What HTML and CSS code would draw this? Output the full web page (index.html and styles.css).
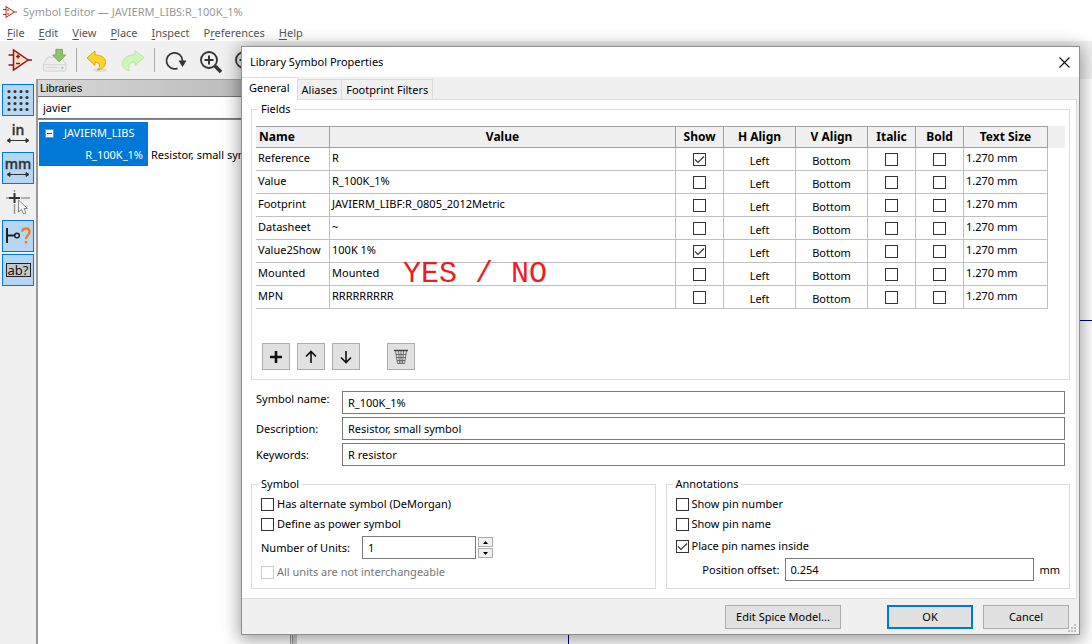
FILE: index.html
```html
<!DOCTYPE html>
<html lang="en">
<head>
<meta charset="utf-8">
<title>Symbol Editor</title>
<link rel="stylesheet" href="styles.css">
</head>
<body>
<div class="app">
  <header class="titlebar">
    <svg class="app-icon" viewBox="0 0 14 14"><path d="M3 1.5V12.500L11.500 7Z" fill="#fdf3dc" stroke="#b3282d"/><path d="M0 4.500H3M0 9.500H3M11.500 7H14M4 5H6M4 9H6" stroke="#b3282d" fill="none"/></svg>
    <span>Symbol Editor — JAVIERM_LIBS:R_100K_1%</span>
  </header>
  <nav class="menubar">
    <button><u>F</u>ile</button><button><u>E</u>dit</button><button><u>V</u>iew</button><button><u>P</u>lace</button><button><u>I</u>nspect</button><button>P<u>r</u>eferences</button><button><u>H</u>elp</button>
  </nav>
  <div class="toolbar">
    <button aria-label="New symbol"><svg viewBox="0 0 24 24"><path d="M5.500 2V22L20 12Z" fill="#f7e8c8" stroke="#a01015" stroke-width="1.500"/><path d="M0.500 7H5.500M0.500 17H5.500M20 12H24M8 8.500H12M10 6.500V10.500M8 15.500H12" stroke="#a01015" stroke-width="1.500" fill="none"/></svg></button>
    <button aria-label="Save"><svg viewBox="0 0 26 24"><path d="M5 9H20L25 17V23Q25 24 24 24H1.500Q.5 24 .5 23V17Z" fill="#ededed" stroke="#cfcfcf"/><path d="M1 17H24.500" stroke="#d6d6d6"/><path d="M4 20H16" stroke="#d0d0d0"/><path d="M20 19.500h2v2h-2z" fill="#8fd08a"/><path d="M14 0.500H21V6.500H24.500L17.500 14L10.500 6.500H14Z" fill="#8fc46c" stroke="#6f9f58"/></svg></button>
    <span class="sep"></span>
    <button aria-label="Undo"><svg viewBox="0 0 24 24"><ellipse cx="14" cy="22" rx="7" ry="2" fill="#dedede"/><path d="M1 10L9 3V7C16 7 20 10.500 19.500 15C19 19 15.500 21.500 11.500 22C14.500 19 14.500 14.500 9 14V17.500Z" fill="#f9d62b" stroke="#dca60c"/></svg></button>
    <button aria-label="Redo"><svg viewBox="0 0 24 24"><path d="M23 9.500L14 2.500V7C6.500 6.500 1.500 11 1.500 15.500C1.500 19.500 4.500 22.500 8.500 22.500C6.500 18 8.500 14 14 14V17.500Z" fill="#d3f3bd" stroke="#b3e89b"/></svg></button>
    <span class="sep"></span>
    <button aria-label="Refresh"><svg viewBox="0 0 24 24"><path d="M13.500 20.300A8 8 0 1 1 18.500 13" fill="none" stroke="#333" stroke-width="1.800"/><path d="M14.500 12.500H22.500L18.500 19Z" fill="#333"/></svg></button>
    <button aria-label="Zoom in"><svg viewBox="0 0 24 24"><circle cx="10" cy="12" r="8" fill="none" stroke="#333" stroke-width="1.800"/><path d="M5.500 12H14.500M10 7.500V16.500" stroke="#333" stroke-width="2"/><path d="M16 18L22 24" stroke="#333" stroke-width="3.500"/></svg></button>
    <button aria-label="Zoom out"><svg viewBox="0 0 24 24"><circle cx="10" cy="12" r="8" fill="none" stroke="#333" stroke-width="1.800"/><path d="M5.500 12H14.500" stroke="#333" stroke-width="2"/><path d="M16 18L22 24" stroke="#333" stroke-width="3.500"/></svg></button>
  </div>
  <div class="workspace">
    <aside class="tools">
      <button class="on" aria-label="Grid"><svg viewBox="0 0 24 24"><path d="M3 3.500H24M3 9.500H24M3 15.500H24M3 21.500H24" stroke="#333" stroke-width="3.200" stroke-linecap="round" stroke-dasharray="0 6"/></svg></button>
      <button aria-label="Inches"><svg viewBox="0 0 24 24"><text x="12" y="13" class="unit">in</text><path d="M2 18.500H22M4 16.500L1 18.500L4 20.500ZM20 16.500L23 18.500L20 20.500Z" stroke="#333" fill="#333"/></svg></button>
      <button class="on" aria-label="Millimeters"><svg viewBox="0 0 24 24"><text x="12" y="13" class="unit">mm</text><path d="M2 18.500H22M4 16.500L1 18.500L4 20.500ZM20 16.500L23 18.500L20 20.500Z" stroke="#333" fill="#333"/></svg></button>
      <button aria-label="Cursor shape"><svg viewBox="0 0 24 24"><path d="M0 8H5M15 8H24M8.500 0V2M8.500 14V24" stroke="#999" stroke-width="1.500"/><path d="M3 8H14M8.500 3V13" stroke="#333" stroke-width="2"/><path d="M12.500 10V22L15.500 19.500L17.500 24L20 23L18 18.500H21.500Z" fill="#f5f5f5" stroke="#888"/></svg></button>
      <button class="on" aria-label="Pin electrical type"><svg viewBox="0 0 24 24"><path d="M1 4V19M1 11.500H9" stroke="#222" stroke-width="2"/><circle cx="11" cy="11.500" r="2.300" fill="none" stroke="#222" stroke-width="1.500"/><path d="M16 7.500C17 3.500 23.500 3.500 23.500 8C23.500 11 20 11.500 20 15M20 17V19.500" fill="none" stroke="#f47b20" stroke-width="2.400"/></svg></button>
      <button class="on" aria-label="Show text"><svg viewBox="0 0 24 24"><rect x=".5" y="5.500" width="24" height="13" fill="#c8c8c8" stroke="#222"/><text x="12" y="17" class="abc">ab?</text></svg></button>
    </aside>
    <section class="libraries">
      <h2>Libraries</h2>
      <input class="search" aria-label="Filter libraries" value="javier">
      <div class="tree">
        <div class="names">
          <div class="node"><svg viewBox="0 0 9 9"><path d="M.5 .5H8.500V8.500H.5Z" fill="#f6f6f6" stroke="#8c8c8c"/><path d="M2 4.500H7" stroke="#2a4fa0"/></svg>JAVIERM_LIBS</div>
          <div class="leaf">R_100K_1%</div>
        </div>
        <div class="descr">Resistor, small symbol</div>
      </div>
    </section>
    <div class="splitter"></div>
    <main class="canvas"></main>
  </div>
</div>

<div class="dialog" role="dialog" aria-labelledby="dlg-title">
  <div class="dlg-head">
    <span id="dlg-title">Library Symbol Properties</span>
    <button class="close" aria-label="Close"><svg viewBox="0 0 11 11"><path d="M.5 .5L10.500 10.500M10.500 .5L.5 10.500" stroke="#111" stroke-width="1.200"/></svg></button>
  </div>
  <div class="tabs" role="tablist">
    <button role="tab" class="tab active">General</button><button role="tab" class="tab">Aliases</button><button role="tab" class="tab">Footprint Filters</button>
  </div>
  <div class="page">
    <fieldset class="fields">
      <legend>Fields</legend>
      <table>
        <colgroup><col class="c-name"><col><col class="c-check"><col class="c-align"><col class="c-align"><col class="c-check"><col class="c-check"><col class="c-size"><col class="c-fill"></colgroup>
        <thead><tr><th class="left">Name</th><th>Value</th><th>Show</th><th>H Align</th><th>V Align</th><th>Italic</th><th>Bold</th><th>Text Size</th><td class="fill"></td></tr></thead>
        <tbody>
          <tr><td>Reference</td><td>R</td><td class="ck"><input type="checkbox" aria-label="Show Reference" checked></td><td class="al">Left</td><td class="al">Bottom</td><td class="ck"><input type="checkbox" aria-label="Italic"></td><td class="ck"><input type="checkbox" aria-label="Bold"></td><td>1.270 mm</td></tr>
          <tr><td>Value</td><td>R_100K_1%</td><td class="ck"><input type="checkbox" aria-label="Show Value"></td><td class="al">Left</td><td class="al">Bottom</td><td class="ck"><input type="checkbox" aria-label="Italic"></td><td class="ck"><input type="checkbox" aria-label="Bold"></td><td>1.270 mm</td></tr>
          <tr><td>Footprint</td><td>JAVIERM_LIBF:R_0805_2012Metric</td><td class="ck"><input type="checkbox" aria-label="Show Footprint"></td><td class="al">Left</td><td class="al">Bottom</td><td class="ck"><input type="checkbox" aria-label="Italic"></td><td class="ck"><input type="checkbox" aria-label="Bold"></td><td>1.270 mm</td></tr>
          <tr><td>Datasheet</td><td>~</td><td class="ck"><input type="checkbox" aria-label="Show Datasheet"></td><td class="al">Left</td><td class="al">Bottom</td><td class="ck"><input type="checkbox" aria-label="Italic"></td><td class="ck"><input type="checkbox" aria-label="Bold"></td><td>1.270 mm</td></tr>
          <tr><td>Value2Show</td><td>100K 1%</td><td class="ck"><input type="checkbox" aria-label="Show Value2Show" checked></td><td class="al">Left</td><td class="al">Bottom</td><td class="ck"><input type="checkbox" aria-label="Italic"></td><td class="ck"><input type="checkbox" aria-label="Bold"></td><td>1.270 mm</td></tr>
          <tr><td>Mounted</td><td class="noted">Mounted<span class="note">YES / NO</span></td><td class="ck"><input type="checkbox" aria-label="Show Mounted"></td><td class="al">Left</td><td class="al">Bottom</td><td class="ck"><input type="checkbox" aria-label="Italic"></td><td class="ck"><input type="checkbox" aria-label="Bold"></td><td>1.270 mm</td></tr>
          <tr><td>MPN</td><td>RRRRRRRRR</td><td class="ck"><input type="checkbox" aria-label="Show MPN"></td><td class="al">Left</td><td class="al">Bottom</td><td class="ck"><input type="checkbox" aria-label="Italic"></td><td class="ck"><input type="checkbox" aria-label="Bold"></td><td>1.270 mm</td></tr>
        </tbody>
      </table>
      <div class="row-tools">
        <button aria-label="Add field"><svg viewBox="0 0 16 16"><path d="M2 8H14M8 2V14" stroke="#111" stroke-width="2.600"/></svg></button>
        <button aria-label="Move up"><svg viewBox="0 0 16 16"><path d="M8 14V2.500M3 7.500L8 2.500L13 7.500" fill="none" stroke="#111" stroke-width="1.600"/></svg></button>
        <button aria-label="Move down"><svg viewBox="0 0 16 16"><path d="M8 2V13.500M3 8.500L8 13.500L13 8.500" fill="none" stroke="#111" stroke-width="1.600"/></svg></button>
        <button class="trash" aria-label="Delete field"><svg viewBox="0 0 16 16"><path d="M1 1.500H15" stroke="#444" stroke-width="1.500"/><path d="M2.500 2L4.500 14.500H11.500L13.500 2M5.500 2L6.500 14M8 2V14M10.500 2L9.500 14M3 5.500H13M3.500 8.500H12.500M4 11.500H12" fill="none" stroke="#555" stroke-width=".8"/></svg></button>
      </div>
    </fieldset>

    <div class="info">
      <label class="raised" for="sym-name">Symbol name:</label><input id="sym-name" value="R_100K_1%">
      <label for="sym-desc">Description:</label><input id="sym-desc" value="Resistor, small symbol">
      <label for="sym-keys">Keywords:</label><input id="sym-keys" value="R resistor">
    </div>

    <div class="groups">
      <fieldset class="symbol">
        <legend>Symbol</legend>
        <label class="opt"><input type="checkbox">Has alternate symbol (DeMorgan)</label>
        <label class="opt"><input type="checkbox">Define as power symbol</label>
        <div class="units">
          <label for="units">Number of Units:</label><input id="units" value="1">
          <span class="spin"><button aria-label="Increase"><svg viewBox="0 0 5 3"><path d="M0 3H5L2.500 0Z"/></svg></button><button aria-label="Decrease"><svg viewBox="0 0 5 3"><path d="M0 0H5L2.500 3Z"/></svg></button></span>
        </div>
        <label class="opt off"><input type="checkbox" disabled>All units are not interchangeable</label>
      </fieldset>
      <fieldset class="annotations">
        <legend>Annotations</legend>
        <label class="opt"><input type="checkbox">Show pin number</label>
        <label class="opt"><input type="checkbox">Show pin name</label>
        <label class="opt inside"><input type="checkbox" checked>Place pin names inside</label>
        <div class="offset"><label for="offset">Position offset:</label><input id="offset" value="0.254"><span>mm</span></div>
      </fieldset>
    </div>
  </div>
  <footer class="dlg-foot">
    <button class="btn spice">Edit Spice Model...</button>
    <button class="btn primary">OK</button>
    <button class="btn">Cancel</button>
    <svg class="grip" viewBox="0 0 8 8"><path d="M6 0h2v2h-2zM3 3h2v2h-2zM6 3h2v2h-2zM0 6h2v2h-2zM3 6h2v2h-2zM6 6h2v2h-2z" fill="#bfbfbf"/></svg>
  </footer>
</div>
</body>
</html>
```
FILE: styles.css
```css
* { box-sizing: border-box; }
body, button, input {
  font: 11px/16px "Segoe UI", "Noto Sans", "Open Sans", sans-serif;
  color: #000;
}
body { margin: 0; }
button { margin: 0; padding: 0; border: 0; background: none; }
svg { display: block; }

/* Editor window */
.app { display: flex; flex-direction: column; height: 100vh; overflow: hidden; background: #f0f0f0; }
.titlebar { display: flex; align-items: center; gap: 6px; height: 23px; padding-left: 3px; background: #fff; color: #999; white-space: nowrap; }
.app-icon { width: 14px; height: 14px; }
.menubar { display: flex; gap: 14px; height: 18px; padding: 2px 7px 0; background: #fff; }
.menubar button { color: #555; }
.menubar u { text-underline-offset: 2px; }
.toolbar { display: flex; align-items: center; gap: 11px; height: 38px; padding: 0 8px; }
.toolbar button svg { width: 24px; height: 24px; overflow: visible; }
.toolbar .sep { width: 1px; height: 24px; background: #a8a8a8; margin: 0 -2px; }
.workspace { flex: 1; display: flex; min-height: 0; }
.tools { display: flex; flex-direction: column; gap: 2px; width: 36px; padding: 5px 2px; }
.tools button { display: grid; place-items: center; width: 32px; height: 32px; border: 1px solid transparent; }
.tools .on { background: #b5d7f3; border-color: #0078d7; }
.tools svg { width: 24px; height: 24px; overflow: visible; }
.unit { font: 500 14px "Noto Sans", sans-serif; text-anchor: middle; fill: #333; stroke: #333; stroke-width: .4px; }
.abc { font: 13px "Noto Sans", sans-serif; text-anchor: middle; fill: #111; }
.libraries { width: 255px; border-left: 2px solid #999; border-right: 1px solid #999; background: #fff; }
.libraries h2 { margin: 0; padding-left: 2px; border-top: 1px solid #a0a0a0; background: linear-gradient(90deg, #d8d8d8, #b4b4b4); font: 11px/16px "Liberation Sans", Arial, sans-serif; }
.search { display: block; width: 100%; height: 23px; padding: 0 5px; border: 1px solid #777; border-left: 0; }
.tree { display: flex; border-top: 1px solid #888; padding: 2px 0 0 1px; line-height: 22px; white-space: nowrap; overflow: hidden; }
.names { width: 109px; background: #0078d7; color: #fff; }
.node { display: flex; align-items: center; gap: 10px; padding-left: 6px; }
.node svg { width: 9px; height: 9px; }
.leaf { text-align: right; padding-right: 5px; }
.descr { padding: 22px 0 0 3px; }
.splitter { width: 6px; border-left: 1px solid #e4e4e4; border-right: 4px solid #ccc; background: #999; }
.canvas {
  flex: 1;
  background:
    linear-gradient(#000084, #000084) 271px 0 / 1px 100% no-repeat,
    linear-gradient(#000084, #000084) 0 241px / 100% 1px no-repeat,
    #fff;
}

/* Properties dialog */
.dialog {
  position: absolute; top: 46px; left: 241px; right: 12px;
  border: 1px solid #8f8f8f; background: #f0f0f0;
  box-shadow: 0 3px 16px 2px rgba(0, 0, 0, .38);
}
.dlg-head { display: flex; align-items: center; justify-content: space-between; height: 30px; padding: 0 9px 0 8px; background: #fff; }
.close svg { width: 11px; height: 11px; }
.tabs { display: flex; align-items: flex-end; height: 22px; }
.tab { height: 20px; padding: 0 4px; border: 1px solid #dcdcdc; border-width: 1px 1px 0 0; }
.tab.active { height: 23px; padding: 0 7px 3px; background: #fff; margin-bottom: -1px; z-index: 1; }
.page { margin-right: 2px; padding: 1px 6px 9px 9px; border: 1px solid #dcdcdc; border-left: 0; background: #fff; }
fieldset { min-width: 0; margin: 0; padding: 0 4px; border: 1px solid #dcdcdc; }
legend { margin-left: 2px; padding: 0 3px; }
.fields { padding-bottom: 9px; }

table { width: 100%; margin-top: 9px; table-layout: fixed; border-collapse: separate; border-spacing: 0; }
.c-name { width: 74px; }
.c-check { width: 48px; }
.c-align { width: 72px; }
.c-size { width: 84px; }
.c-fill { width: 17px; }
th { height: 22px; padding: 0; border: 1px solid #a0a0a0; border-left: 0; background: #f0f0f0; font-size: 12px; }
th.left { text-align: left; padding-left: 3px; }
td { height: 23px; padding: 2px 2px 4px; border: 1px solid #c0c0c0; border-width: 0 1px 1px 0; white-space: nowrap; }
td.fill { height: 22px; padding: 0; background: #f0f0f0; border: 0; }
td.ck { padding: 1px 0 0; text-align: center; }
td.ck input { display: block; margin: 0 auto; }
td.al { padding: 5px 0 1px; text-align: center; }
.noted { position: relative; }
.note { position: absolute; left: 73px; top: -4px; color: #ed1c24; font: 30px/30px "Liberation Mono", monospace; }

input[type="checkbox"] { appearance: none; flex: none; width: 13px; height: 13px; margin: 0; border: 1px solid #333; background: #fff; }
input[type="checkbox"]:checked { background: url("data:image/svg+xml,%3Csvg xmlns='http://www.w3.org/2000/svg' viewBox='0 0 11 11'%3E%3Cpath d='M1 5.500L4 8.500L10 2.500' fill='none' stroke='%23333' stroke-width='1.200'/%3E%3C/svg%3E") center / 11px; }
input[type="checkbox"]:disabled { border-color: #ccc; }

.row-tools { display: flex; gap: 7px; margin: 34px 6px 0; }
.row-tools button { display: grid; place-items: center; width: 28px; height: 27px; border: 1px solid #adadad; background: #e1e1e1; }
.row-tools svg { width: 16px; height: 16px; }
.row-tools .trash { margin-left: 20px; }

.info { display: grid; grid-template-columns: 81px 1fr; align-items: center; gap: 3px 5px; margin: 11px 5px 10px; }
.raised { align-self: start; }
.info input, .units input, .offset input { min-width: 0; height: 23px; padding: 0 5px; border: 1px solid #7a7a7a; background: #fff; }

.groups { display: grid; grid-template-columns: 1fr 1fr; gap: 10px; }
.groups fieldset { padding: 2px 9px 6px; }
.groups legend { margin-left: -3px; }
.opt { display: flex; align-items: center; gap: 3px; height: 20px; }
.off { margin-top: 1px; color: #777; }
.units { display: flex; align-items: center; height: 27px; }
.units label { width: 101px; }
.units input { width: 114px; }
.spin { display: grid; gap: 1px; margin-left: 2px; }
.spin button { display: grid; place-items: center; width: 15px; height: 10px; border: 1px solid #adadad; background: #f0f0f0; }
.spin svg { width: 5px; height: 3px; }
.inside { height: 24px; }
.offset { display: flex; align-items: center; gap: 5px; padding-left: 25px; }
.offset label { width: 79px; text-align: right; }
.offset input { flex: 1; }

.dlg-foot { position: relative; display: flex; justify-content: flex-end; gap: 10px; padding: 6px 10px 5px; }
.btn { width: 86px; height: 24px; border: 1px solid #adadad; background: #e1e1e1; }
.spice { width: 116px; margin-right: 36px; }
.primary { border: 2px solid #0078d7; }
.grip { position: absolute; right: 3px; bottom: 2px; width: 8px; height: 8px; }
```
